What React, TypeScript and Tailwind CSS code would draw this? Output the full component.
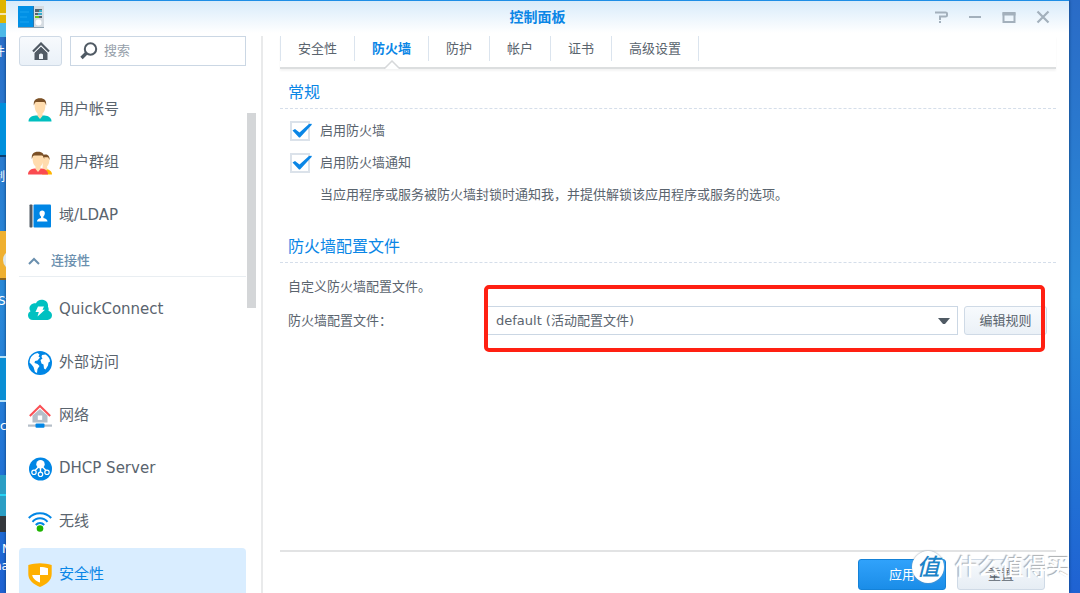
// Control panel window: sidebar navigation on the left, firewall settings on the right

import React, { useState } from 'react';
import clsx from 'clsx';

interface NavItem {
  id: string;
  label: string;
  icon: React.ReactNode;
}

// Sidebar icons, all drawn on a 24x24 grid
const UserIcon = () => (
  <svg viewBox="0 0 24 24" className="size-6">
    <path d="M0.5 23.500c0-4 3-5.500 7-6h9c4 .5 7 2 7 6z" fill="#00bfbf" />
    <path d="M6.500 6c0-4 2-5.500 5.500-5.500S17.500 2 17.500 6c0 4.500-1 8-3 9.500V18L12 21 9.500 18v-2.500c-2-1.500-3-5-3-9.500z" fill="#ffdcae" />
    <path d="M5.800 7.500C5.300 2.500 7.500 0.200 12 0.200s6.700 2.300 6.200 7.300l-1.200-3C15.500 3.600 13.500 4 12 4s-3.500-.4-5 .5z" fill="#7a5027" />
  </svg>
);

const GroupIcon = () => (
  <svg viewBox="0 0 24 24" className="size-6">
    <path d="M14 23.500l4-5.500c3 .5 6 2 6 5.500z" fill="#ffb400" />
    <path d="M15 6c1-2 6-2.500 6.500 1.500 0 4-1 6.500-2.500 8l.5 2.500-2 2-3-2z" fill="#ffdcae" />
    <path d="M14.500 5c2-2.500 7.500-2 7 4l-1.200-2.500c-1-.8-3.500 0-5-.2z" fill="#7a5027" />
    <path d="M0 23.500c0-4 3-5.500 6.500-6h7c3.500.5 6.500 2 6.500 6z" fill="#fa4b50" />
    <path d="M4.500 6.500c0-4 2-5.500 5.500-5.500s5.500 1.500 5.500 5.500c0 4.500-1 7.500-3 9V18L10 21 7.500 18v-2.500c-2-1.500-3-4.500-3-9z" fill="#ffdcae" />
    <path d="M3.800 8C3.300 3 5.500.7 10 .7S16.700 3 16.200 8L15 5c-1.500-.9-3.500-.5-5-.5S6.500 4.100 5 5z" fill="#7a5027" />
  </svg>
);

const LdapIcon = () => (
  <svg viewBox="0 0 24 24" className="size-6">
    <rect x="1.500" y=".5" width="3" height="23" rx=".8" fill="#505a64" />
    <rect x="5.500" y=".5" width="17.500" height="23" rx="1" fill="#0086e5" />
    <path d="M9 17.500c0-2 1.500-3 4-3.500v-1.500c-2.200-2-2-6 1.200-6s3.400 4 1.200 6V14c2.500.5 4.100 1.500 4.100 3.500z" fill="#fff" />
  </svg>
);

const QuickConnectIcon = () => (
  <svg viewBox="0 0 24 24" className="size-6">
    <path d="M5 22C2 22 0 20 0 17.500c0-2 1-3.500 2.500-4.200C-.5 9 3.500 4.500 8 5.200c1-2.500 3.500-3.700 6.500-3.400 4 .5 6 3.500 5.500 7 .8 1.200.8 2.500.5 4 2 .8 3.500 2.300 3.500 4.500C24 20 22 22 19.500 22z" fill="#00c1c1" />
    <path d="M10 8.500h6l-1.500 3.300H17l-7.500 6.700 1.300-4.500H7.500z" fill="#fff" />
  </svg>
);

const GlobeIcon = () => (
  <svg viewBox="0 0 24 24" className="size-6">
    <circle cx="12" cy="12" r="12" fill="#0086e5" />
    <path d="M2 8.500C3 5 6 2.500 9.500 2l2 1.500-1 2 1.500 1-2.500 3-2.500.5-.5 2 3 1 2 2-2 3-.5 4-2-1-1.500-5-2-2.500-2-2z" fill="#fff" />
    <path d="M14 4l3.500-.5c2 1 3.500 3 4.200 5l.3 2-1.500 1-.5 3-2.500 4-1.500-1-.5-4-2-1-1-3.500 2-1.500-1-1.500z" fill="#fff" />
  </svg>
);

const NetworkIcon = () => (
  <svg viewBox="0 0 24 24" className="size-6">
    <path d="M12 5l7.500 6.500v7h-15v-7z" fill="#b4bec8" />
    <path d="M1.800 12L12 2l10.200 10" fill="none" stroke="#fa5055" strokeWidth="2" />
    <rect x="9.800" y="11.500" width="4.400" height="4.400" fill="#fff" />
    <rect x="0" y="20.500" width="24" height="2.200" fill="#b4bec8" />
    <rect x="7.500" y="19.500" width="9" height="4.300" rx="1" fill="#0086e5" />
  </svg>
);

const DhcpIcon = () => (
  <svg viewBox="0 0 24 24" className="size-6">
    <circle cx="12.500" cy="12" r="11.500" fill="#0086e5" />
    <circle cx="12.500" cy="7.300" r="4.200" fill="#fff" />
    <path d="M10.500 10l-4 4M14.500 10l4 4M12.500 11v4" stroke="#fff" strokeWidth="1.400" />
    <g fill="#0086e5" stroke="#fff" strokeWidth="1.200">
      <circle cx="6" cy="15.300" r="2.200" />
      <circle cx="19" cy="15.300" r="2.200" />
      <circle cx="12.500" cy="17.300" r="2.200" />
    </g>
  </svg>
);

const WifiIcon = () => (
  <svg viewBox="0 0 24 24" className="size-6">
    <g fill="none" stroke="#0086e5" strokeWidth="2">
      <path d="M.8 8C6.500 1.500 17.500 1.500 23.200 8" />
      <path d="M4.500 11.800C8.500 7 15.500 7 19.500 11.800" />
      <path d="M7.800 15c2.300-2.800 6.100-2.800 8.400 0" />
    </g>
    <circle cx="12" cy="18.500" r="3.300" fill="#1eb400" />
  </svg>
);

const ShieldIcon = () => (
  <svg viewBox="0 0 24 24" className="size-6">
    <path d="M.3 2C4 1 8 .3 12 .3S20 1 23.700 2v9c0 6.500-5.500 10.500-11.700 13C5.800 21.500.3 17.500.3 11z" fill="#ffb000" />
    <path d="M12 4c3 0 5.500.5 8 1.200V12h-8zM12 12v7.500C8 18 4.700 15.500 4.200 12z" fill="#fff" />
  </svg>
);

const generalItems: NavItem[] = [
  { id: 'user', label: '用户帐号', icon: <UserIcon /> },
  { id: 'group', label: '用户群组', icon: <GroupIcon /> },
  { id: 'ldap', label: '域/LDAP', icon: <LdapIcon /> },
];

const connectivityItems: NavItem[] = [
  { id: 'quickconnect', label: 'QuickConnect', icon: <QuickConnectIcon /> },
  { id: 'external', label: '外部访问', icon: <GlobeIcon /> },
  { id: 'network', label: '网络', icon: <NetworkIcon /> },
  { id: 'dhcp', label: 'DHCP Server', icon: <DhcpIcon /> },
  { id: 'wireless', label: '无线', icon: <WifiIcon /> },
  { id: 'security', label: '安全性', icon: <ShieldIcon /> },
];

const tabs = ['安全性', '防火墙', '防护', '帐户', '证书', '高级设置'];

// Desktop shortcuts that peek out from behind the window
const Desktop = () => (
  <div className="relative w-[6px] shrink-0 overflow-hidden text-xs text-white" aria-hidden="true">
    <div className="absolute top-0 h-[37px] w-full border-b-[14px] border-[#4cb9e8] bg-[#e0b400]" />
    <div className="absolute top-[13px] h-[2px] w-full bg-[#f5e6b0]" />
    <span className="absolute top-[44px] -left-[7px] leading-4">件</span>
    <div className="absolute top-[103px] h-[54px] w-full border-b-2 border-[#0b3f70] bg-[#0090dc]" />
    <span className="absolute top-[169px] -left-[7px] leading-4">制</span>
    <div className="absolute top-[231px] h-[49px] w-full border-b-2 border-[#8a6420] bg-[#efb030]" />
    <div className="absolute top-[250px] left-[3px] size-[20px] rounded-full bg-[#dfe8ea]" />
    <span className="absolute top-[293px] -left-[2px] leading-4">St</span>
    <div className="absolute top-[356px] h-[46px] w-full border-y-2 border-[#b9e2f7] bg-[#0a8ed4]" />
    <span className="absolute top-[418px] left-0 leading-4">c</span>
    <div className="absolute top-[475px] h-[57px] w-full border-b-[16px] border-[#34383c] bg-[#2b9ec4]" />
    <div className="absolute top-[494px] h-[2px] w-full bg-[#27d3f5]" />
    <span className="absolute top-[541px] left-[2px] leading-4">N</span>
    <span className="absolute top-[558px] -left-[6px] leading-4">na</span>
  </div>
);

const TitleBar = () => (
  <header className="grid h-[33px] shrink-0 grid-cols-[1fr_auto_1fr] items-center border-t border-[#1e8ee6] bg-linear-to-b from-[#d8ebfa] to-white px-3">
    <svg viewBox="0 0 26 22" className="h-[22px] w-[26px]">
      <rect x="14" y="0" width="12" height="21" fill="#d5dce2" />
      <rect x="0" y="0" width="15" height="21" fill="#0090e6" />
      <path d="M2 6h9M2 11h7M2 16h9" stroke="#1aa4f0" />
      <path d="M15.500 0v21" stroke="#2a78ae" />
      <path d="M0 21.500h26" stroke="#8fa3b2" />
      <rect x="17" y="3" width="7" height="9" fill="#56646e" />
      <path d="M21 5h3M20 8h4" stroke="#2fc4ea" strokeWidth="1.500" />
      <path d="M17 6.500h7M17 9.500h7" stroke="#d5dce2" />
      <path d="M17 11h4" stroke="#74c319" strokeWidth="2" />
      <circle cx="20.500" cy="16.500" r="3" fill="#fff" />
    </svg>
    <h1 className="text-sm font-bold text-[#0a86e6]">控制面板</h1>
    <div className="mr-[5px] flex justify-end gap-4 text-[#a3b0bc]">
      <button type="button" aria-label="帮助" className="flex size-[18px] items-center justify-center">
        <svg viewBox="0 0 14 14" className="size-[14px]" fill="none" stroke="currentColor" strokeWidth="2">
          <path d="M1 2.500h10.500q1.500 0 1.500 1v2q0 1-1.500 1H6v3.500M5 12h2" />
        </svg>
      </button>
      <button type="button" aria-label="最小化" className="flex size-[18px] items-center justify-center">
        <svg viewBox="0 0 14 14" className="size-[14px]" stroke="currentColor" strokeWidth="2">
          <path d="M1 7h12" />
        </svg>
      </button>
      <button type="button" aria-label="最大化" className="flex size-[18px] items-center justify-center">
        <svg viewBox="0 0 14 14" className="size-[14px]" fill="none" stroke="currentColor" strokeWidth="2">
          <path d="M1.500 3v9h11V3M.5 3h13" />
          <path d="M.5 4h13" strokeWidth="3" />
        </svg>
      </button>
      <button type="button" aria-label="关闭" className="flex size-[18px] items-center justify-center">
        <svg viewBox="0 0 14 14" className="size-[14px]" stroke="currentColor" strokeWidth="2.200">
          <path d="M1.500 1.500l11 11M12.500 1.500l-11 11" />
        </svg>
      </button>
    </div>
  </header>
);

interface NavListProps {
  items: NavItem[];
  active: string;
  onSelect: (id: string) => void;
}

const NavList: React.FC<NavListProps> = ({ items, active, onSelect }) => (
  <ul>
    {items.map(item => (
      <li key={item.id}>
        <button
          type="button"
          onClick={() => onSelect(item.id)}
          className={clsx(
            'flex h-[53px] w-full items-center gap-[7px] rounded-sm pl-[9px] text-[15px]',
            active === item.id ? 'bg-[#d9edff] text-[#0a86e6]' : 'text-[#5a646e]'
          )}
        >
          {item.icon}
          {item.label}
        </button>
      </li>
    ))}
  </ul>
);

const Sidebar = () => {
  const [active, setActive] = useState('security');

  return (
    <aside className="flex w-[257px] shrink-0 flex-col border-r-2 border-[#e9eaeb] pl-[13px]">
      <div className="flex gap-2 pr-[15px]">
        <button
          type="button"
          aria-label="主页"
          className="flex h-[30px] w-[43px] items-center justify-center rounded-[3px] border border-[#cfdae6] bg-linear-to-b from-[#f7fafd] to-[#eaf1f8]"
        >
          <svg viewBox="0 0 18 18" className="size-[18px]">
            <path d="M9 4.500L2.500 10.500V18h13v-7.500z" fill="#505a64" />
            <path d="M7 17v-4.500q2-2 4 0V17z" fill="#eef3f8" />
            <path d="M1 9.500l8-8 8 8" fill="none" stroke="#f2f6fa" strokeWidth="4" />
            <path d="M1 9.500l8-8 8 8" fill="none" stroke="#505a64" strokeWidth="2.200" />
          </svg>
        </button>
        <label className="flex h-[30px] min-w-0 flex-1 items-center gap-[6px] border border-[#cbd7e4] pl-[9px]">
          <svg viewBox="0 0 18 18" className="size-[18px] shrink-0" fill="none" stroke="#505a64">
            <circle cx="10.500" cy="7" r="5.700" strokeWidth="2" />
            <path d="M6.500 11L1.500 16" strokeWidth="3.400" />
          </svg>
          <input
            type="text"
            placeholder="搜索"
            aria-label="搜索"
            className="w-full min-w-0 text-[13px] outline-none placeholder:text-[#96a0aa]"
          />
        </label>
      </div>

      <div className="mt-[17px] flex min-h-0 flex-1 overflow-hidden">
        <nav className="min-w-0 flex-1">
          <NavList items={generalItems} active={active} onSelect={setActive} />
          <button
            type="button"
            className="mb-[6px] flex h-[35px] w-full items-center gap-[11px] border-b border-[#e9eef2] pt-1 pl-[9px] text-[13px] font-medium text-[#6a8fae]"
          >
            <svg viewBox="0 0 12 8" className="h-2 w-3" fill="none" stroke="currentColor" strokeWidth="2">
              <path d="M1 7l5-5 5 5" />
            </svg>
            连接性
          </button>
          <NavList items={connectivityItems} active={active} onSelect={setActive} />
        </nav>
        {/* scrollbar thumb */}
        <div className="mt-[30px] mr-[5px] ml-px h-[195px] w-[9px] bg-[#d4d6d8]" />
      </div>
    </aside>
  );
};

interface CheckFieldProps {
  label: string;
  checked: boolean;
  onChange: (checked: boolean) => void;
}

const CheckField: React.FC<CheckFieldProps> = ({ label, checked, onChange }) => (
  <label className="flex h-8 items-center gap-[10px]">
    <span className="relative flex">
      <input
        type="checkbox"
        checked={checked}
        onChange={e => onChange(e.target.checked)}
        className="size-[20px] appearance-none border-2 border-[#dbe2ea] bg-white"
      />
      {checked && (
        <svg viewBox="0 0 20 16" className="pointer-events-none absolute top-[2px] left-[2px] h-4 w-5">
          <path d="M.5 7.500L3 6l4.500 3.500L17 1l2.500-.3.3 1L8 14.500H7z" fill="#0a86e6" />
        </svg>
      )}
    </span>
    {label}
  </label>
);

const SectionTitle: React.FC<{ children: React.ReactNode }> = ({ children }) => (
  <h2 className="h-8 border-b border-dashed border-[#d5deea] pl-2 text-base leading-8 text-[#0a86e6]">{children}</h2>
);

const FirewallPanel = () => {
  const [tab, setTab] = useState('防火墙');
  const [enabled, setEnabled] = useState(true);
  const [notify, setNotify] = useState(true);

  return (
    <main className="flex min-w-0 flex-1 flex-col pr-[13px] pl-[17px] text-[13px] text-[#5a646e]">
      <div className="flex h-[33px] shrink-0 border-b-2 border-[#dcdedf] shadow-[0_2px_2px_#f4f4f4]">
        <div className="flex h-[25px] border-l border-[#dbe4ee]">
          {tabs.map(name => (
            <button
              key={name}
              type="button"
              onClick={() => setTab(name)}
              className={clsx(
                'relative border-r border-[#dbe4ee] px-[17px]',
                tab === name && 'font-bold text-[#0a86e6]'
              )}
            >
              {name}
              {tab === name && (
                <svg viewBox="0 0 16 9" className="absolute top-[24px] left-1/2 -ml-2 h-[9px] w-4">
                  <path d="M1 8L8 1l7 7v1H1z" fill="#fff" />
                  <path d="M0 8h1l7-7 7 7h1" fill="none" stroke="#d6d8da" strokeWidth="1.500" />
                </svg>
              )}
            </button>
          ))}
        </div>
      </div>

      <form className="flex-1 pt-2" onSubmit={e => e.preventDefault()}>
        <SectionTitle>常规</SectionTitle>
        <div className="pt-[6px] pl-[10px]">
          <CheckField label="启用防火墙" checked={enabled} onChange={setEnabled} />
          <CheckField label="启用防火墙通知" checked={notify} onChange={setNotify} />
          <p className="pl-[30px] leading-8">当应用程序或服务被防火墙封锁时通知我，并提供解锁该应用程序或服务的选项。</p>
        </div>

        <div className="pt-5">
          <SectionTitle>防火墙配置文件</SectionTitle>
        </div>
        <p className="pt-2 pl-2 leading-8">自定义防火墙配置文件。</p>
        <div className="flex items-center pt-[3px] pr-[9px] pl-2">
          <label htmlFor="profile" className="w-[198px] shrink-0">
            防火墙配置文件：
          </label>
          <div className="relative flex min-w-0 flex-1 gap-[6px]">
            <div className="relative min-w-0 flex-1">
              <select
                id="profile"
                className="block h-[29px] w-full appearance-none border border-[#cbd7e4] bg-white pr-8 pl-[9px] outline-none"
              >
                <option>default (活动配置文件)</option>
              </select>
              <svg viewBox="0 0 12 7" className="pointer-events-none absolute top-[12px] right-2 h-[7px] w-3">
                <path d="M0 0h12L7 6H5z" fill="#505a64" />
              </svg>
            </div>
            <button
              type="button"
              className="h-[29px] w-[83px] rounded-[3px] border border-[#cfdae6] bg-linear-to-b from-[#f7fafd] to-[#ebf1f7]"
            >
              编辑规则
            </button>
            {/* red marker around the profile controls */}
            <div className="pointer-events-none absolute -top-[21px] right-[2px] -bottom-[17px] -left-[2px] rounded-[5px] border-4 border-[#ff2012]" />
          </div>
        </div>
      </form>

      <footer className="flex h-[43px] shrink-0 justify-end gap-[11px] border-t-2 border-[#e2e3e4] pt-[7px] pr-[11px]">
        <button
          type="button"
          className="h-[31px] w-[88px] rounded-[3px] border border-[#1482d8] bg-linear-to-b from-[#30a2fb] to-[#1a8de8] text-white"
        >
          应用
        </button>
        <button
          type="button"
          className="h-[31px] w-[88px] rounded-[3px] border border-[#cfdae6] bg-linear-to-b from-[#f7fafd] to-[#e6edf4]"
        >
          重置
        </button>
      </footer>
    </main>
  );
};

// Site stamp over the bottom right corner
const Watermark = () => (
  <div className="pointer-events-none absolute right-[10px] bottom-[10px] flex items-center gap-[11px]">
    <span className="flex size-8 items-center justify-center rounded-full bg-white text-[23px] leading-8 font-medium text-[#1c84c8] italic shadow-[0_0_2px_#8a9aa8]">
      值
    </span>
    <span className="text-[23px] leading-8 font-medium text-white [text-shadow:-1px_-1px_1px_#a9acaf]">什么值得买</span>
  </div>
);

export default function App() {
  return (
    <div className="relative flex h-screen overflow-hidden bg-linear-to-b from-[#2a6bc6] via-[#2a8ad8] to-[#1f62d2] font-['DejaVu_Sans','Noto_Sans_CJK_SC',sans-serif]">
      <Desktop />
      <div className="mr-[11px] flex min-w-0 flex-1 flex-col bg-white shadow-[0_0_3px_#0a3a70]">
        <TitleBar />
        <div className="flex min-h-0 flex-1 pt-[3px]">
          <Sidebar />
          <FirewallPanel />
        </div>
      </div>
      <Watermark />
    </div>
  );
}
